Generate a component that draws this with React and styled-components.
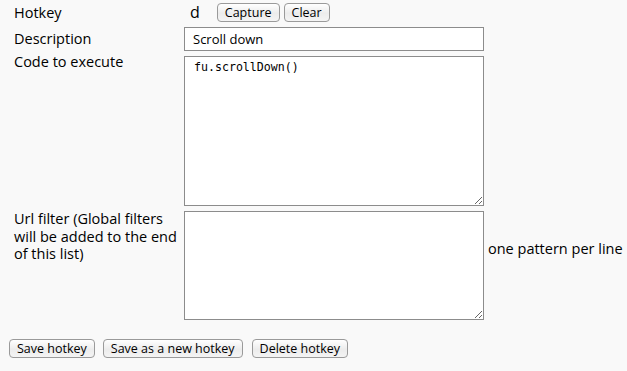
import React from 'react';
import styled, { createGlobalStyle } from 'styled-components';

const Global = createGlobalStyle`
  html, body {
    margin: 0;
    background: #f9f9f9;
  }
  body {
    font-family: "Open Sans", "DejaVu Sans", sans-serif;
    font-size: 14.5px;
    color: #000;
  }
`;

const Page = styled.div`
  width: 627px;
  height: 371px;
  padding: 3px 0 0 9px;
  box-sizing: border-box;
`;

const Form = styled.div`
  display: grid;
  grid-template-columns: 170px 300px auto;
  row-gap: 5px;
  padding-left: 5px;
`;

const Label = styled.div`
  line-height: 17.5px;
  margin-top: ${p => p.top || 0}px;
`;

const Cell = styled.div`
  display: flex;
  align-items: ${p => p.center ? 'center' : 'flex-start'};
`;

const HotkeyValue = styled.span`
  font-size: 16px;
  margin: 0 17px 0 6px;
  line-height: 19px;
`;

const Button = styled.button`
  font-family: "Open Sans", "DejaVu Sans", sans-serif;
  font-size: 12.5px;
  height: 19px;
  padding: 0 7px;
  line-height: 17px;
  border: 1px solid #9a9a9a;
  border-radius: 4px;
  background: linear-gradient(#ffffff, #ececec 55%, #f4f4f4);
  color: #000;
  margin-right: ${p => p.gap || 4}px;
  cursor: pointer;
`;

const TextInput = styled.input`
  width: 300px;
  height: 24px;
  box-sizing: border-box;
  border: 1px solid #8c8c8c;
  background: #fff;
  padding: 0 8px;
  font-family: "Open Sans", "DejaVu Sans", sans-serif;
  font-size: 13px;
  outline: none;
`;

const Area = styled.textarea`
  width: 301px;
  height: ${p => p.h}px;
  box-sizing: border-box;
  border: 1px solid #8c8c8c;
  background: #fff;
  padding: 3px 9px;
  margin: 0;
  font-family: "DejaVu Sans Mono", monospace;
  font-size: 11.6px;
  line-height: 15px;
  resize: both;
  outline: none;
  display: block;
`;

const Note = styled.span`
  padding: 29px 0 0 4px;
  line-height: 18px;
  white-space: nowrap;
`;

const Actions = styled.div`
  display: flex;
  margin-top: 19px;
`;

export default function App() {
  return (
    <Page>
      <Global />
      <Form>
        <Label top={1}>Hotkey</Label>
        <Cell center>
          <HotkeyValue>d</HotkeyValue>
          <Button>Capture</Button>
          <Button>Clear</Button>
        </Cell>
        <div />

        <Label top={3}>Description</Label>
        <Cell>
          <TextInput defaultValue="Scroll down" />
        </Cell>
        <div />

        <Label top={-3}>Code to execute</Label>
        <Cell>
          <Area h={150} defaultValue="fu.scrollDown()" />
        </Cell>
        <div />

        <Label top={-1}>Url filter (Global filters will be added to the end of this list)</Label>
        <Cell>
          <Area h={109} defaultValue="" />
        </Cell>
        <Cell>
          <Note>one pattern per line</Note>
        </Cell>
      </Form>
      <Actions>
        <Button gap={8}>Save hotkey</Button>
        <Button gap={9}>Save as a new hotkey</Button>
        <Button>Delete hotkey</Button>
      </Actions>
    </Page>
  );
}
